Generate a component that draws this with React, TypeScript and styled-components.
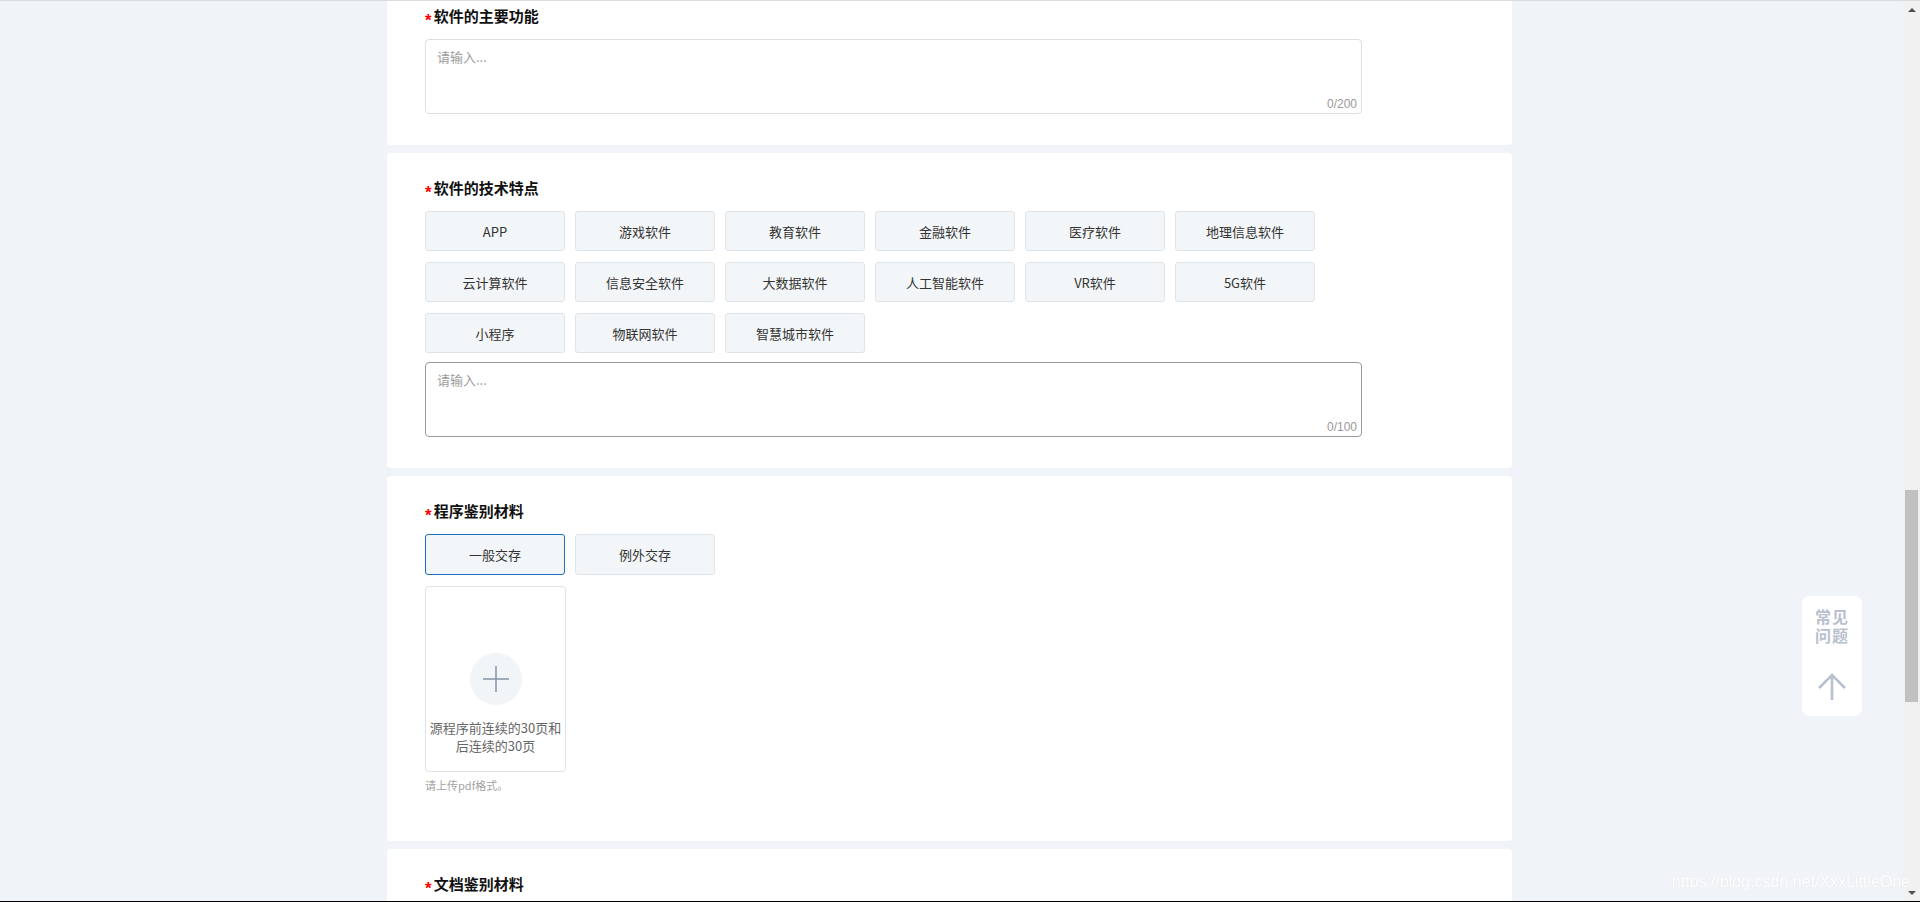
import React from "react"
import styled, {createGlobalStyle} from "styled-components"

const GlobalStyle = createGlobalStyle`
  html, body {
    margin: 0;
    padding: 0;
    overflow: hidden;
  }
  body {
    font-family: "Noto Sans CJK SC", "Noto Sans", sans-serif;
    background: #f0f4f8;
    color: #333;
  }
`

const Screen = styled.div`
  position: relative;
  display: flex;
  width: 1920px;
  height: 902px;
  box-sizing: border-box;
  border-top: 1px solid #d8dcdf;
  border-bottom: 1px solid #000;
  overflow: hidden;
`

const Main = styled.main`
  flex: 1;
  min-width: 0;
  background: #f0f4f8;
  padding-left: 387px;
  overflow: hidden;
`

const Column = styled.div`
  display: flex;
  flex-direction: column;
  gap: 8px;
  width: 1125px;
  margin-top: -20px;
`

const Card = styled.section<{$bottom?: number}>`
  background: #fff;
  border-radius: 4px;
  padding: 24px 38px ${(p) => p.$bottom ?? 31}px;
`

const Label = styled.h3`
  display: flex;
  align-items: center;
  margin: 0 0 12px;
  height: 22px;
  font-size: 15px;
  font-weight: 700;
  line-height: 22px;
  color: #111;
`

const Star = styled.span`
  font-family: "Liberation Sans", Arial, sans-serif;
  color: #f00;
  font-size: 17px;
  font-weight: 700;
  line-height: 17px;
  margin: 8px 2px 0 0;
`

const TagGrid = styled.div`
  display: flex;
  flex-wrap: wrap;
  gap: 11px 10px;
  width: 937px;
`

const Tag = styled.button<{$active?: boolean; $tall?: boolean}>`
  width: 140px;
  height: ${(p) => (p.$tall ? 41 : 40)}px;
  box-sizing: border-box;
  border: 1px solid ${(p) => (p.$active ? "#1d6fc2" : "#dfe4e8")};
  border-radius: 3px;
  background: #f3f6f8;
  color: #333;
  font-family: inherit;
  font-size: 13px;
  padding: 0;
  cursor: pointer;
`

const AreaWrap = styled.div<{$gap?: number}>`
  position: relative;
  width: 937px;
  margin-top: ${(p) => p.$gap ?? 0}px;
`

const Area = styled.textarea<{$hover?: boolean}>`
  display: block;
  width: 100%;
  height: 75px;
  box-sizing: border-box;
  resize: none;
  border: 1px solid ${(p) => (p.$hover ? "#9a9a9a" : "#dcdfe4")};
  border-radius: 4px;
  padding: 8px 11px;
  font-family: inherit;
  font-size: 13px;
  line-height: 18px;
  color: #333;
  outline: none;

  &::placeholder {
    color: #9c9c9c;
  }
`

const Counter = styled.span`
  position: absolute;
  right: 5px;
  bottom: 2px;
  font-family: "Liberation Sans", Arial, sans-serif;
  font-size: 12px;
  line-height: 16px;
  color: #999;
`

const Tabs = styled.div`
  display: flex;
  gap: 10px;
  margin-bottom: 11px;
`

const Upload = styled.div`
  width: 141px;
  height: 186px;
  box-sizing: border-box;
  border: 1px solid #dfe4e8;
  border-radius: 4px;
  display: flex;
  flex-direction: column;
  align-items: center;
  padding: 66px 2px 0;
  cursor: pointer;
`

const PlusCircle = styled.div`
  width: 52px;
  height: 52px;
  border-radius: 50%;
  background: #f2f5f8;
  display: flex;
  align-items: center;
  justify-content: center;
  margin-bottom: 14px;
`

const UploadText = styled.p`
  margin: 0;
  font-size: 13px;
  line-height: 18px;
  color: #666;
  text-align: center;
`

const Hint = styled.p`
  margin: 4px 0 0;
  font-size: 11px;
  line-height: 18px;
  color: #a3a3a3;
`

const Scrollbar = styled.div`
  width: 17px;
  flex: none;
  background: #f1f1f1;
  display: flex;
  flex-direction: column;
`

const ScrollArrow = styled.div<{$down?: boolean}>`
  height: 17px;
  display: flex;
  align-items: center;
  justify-content: center;

  &::before {
    content: "";
    border-left: 4px solid transparent;
    border-right: 4px solid transparent;
    ${(p) =>
      p.$down ? "border-top: 4px solid #505050;" : "border-bottom: 4px solid #505050;"}
  }
`

const Track = styled.div`
  flex: 1;
`

const Thumb = styled.div`
  margin: 472px 2px 0;
  height: 212px;
  background: #c1c1c1;
`

const Helper = styled.aside`
  position: absolute;
  top: 595px;
  right: 58px;
  width: 60px;
  height: 120px;
  box-sizing: border-box;
  background: #fff;
  border-radius: 8px;
  display: flex;
  flex-direction: column;
  align-items: center;
  padding-top: 11px;
  color: #b8bfce;
  cursor: pointer;
`

const HelperText = styled.div`
  font-size: 16px;
  font-weight: 700;
  line-height: 19px;
  text-align: center;
  letter-spacing: 1px;
  margin-bottom: 28px;
`

const Watermark = styled.div`
  position: absolute;
  right: 10px;
  bottom: 10px;
  font-family: "Liberation Sans", Arial, sans-serif;
  font-size: 16px;
  line-height: 18px;
  color: #fff;
  text-shadow: 0 0 1px rgba(120, 130, 140, 0.18);
  pointer-events: none;
`

const tags = [
  "APP",
  "游戏软件",
  "教育软件",
  "金融软件",
  "医疗软件",
  "地理信息软件",
  "云计算软件",
  "信息安全软件",
  "大数据软件",
  "人工智能软件",
  "VR软件",
  "5G软件",
  "小程序",
  "物联网软件",
  "智慧城市软件",
]

function Required({children}: {children: React.ReactNode}) {
  return (
    <Label>
      <Star>*</Star>
      {children}
    </Label>
  )
}

function TextBox({max, hover, gap}: {max: number; hover?: boolean; gap?: number}) {
  return (
    <AreaWrap $gap={gap}>
      <Area $hover={hover} placeholder="请输入..." maxLength={max} />
      <Counter>0/{max}</Counter>
    </AreaWrap>
  )
}

export default function App() {
  return (
    <>
      <GlobalStyle />
      <Screen>
        <Main>
          <Column>
            <Card>
              <Required>软件的主要功能</Required>
              <TextBox max={200} />
            </Card>

            <Card>
              <Required>软件的技术特点</Required>
              <TagGrid>
                {tags.map((t) => (
                  <Tag key={t}>{t}</Tag>
                ))}
              </TagGrid>
              <TextBox max={100} hover gap={9} />
            </Card>

            <Card $bottom={47}>
              <Required>程序鉴别材料</Required>
              <Tabs>
                <Tag $active $tall>
                  一般交存
                </Tag>
                <Tag $tall>例外交存</Tag>
              </Tabs>
              <Upload>
                <PlusCircle>
                  <svg width="28" height="28" viewBox="0 0 28 28">
                    <path d="M14 1v26M1 14h26" stroke="#8793aa" strokeWidth="1.5" />
                  </svg>
                </PlusCircle>
                <UploadText>源程序前连续的30页和后连续的30页</UploadText>
              </Upload>
              <Hint>请上传pdf格式。</Hint>
            </Card>

            <Card>
              <Required>文档鉴别材料</Required>
            </Card>
          </Column>
        </Main>

        <Scrollbar>
          <ScrollArrow />
          <Track>
            <Thumb />
          </Track>
          <ScrollArrow $down />
        </Scrollbar>

        <Helper>
          <HelperText>
            常见
            <br />
            问题
          </HelperText>
          <svg width="30" height="28" viewBox="0 0 30 28">
            <path
              d="M15 27V2M2 15L15 2l13 13"
              fill="none"
              stroke="#b8bfce"
              strokeWidth="2.6"
            />
          </svg>
        </Helper>

        <Watermark>https://blog.csdn.net/XxxLittleOne</Watermark>
      </Screen>
    </>
  )
}
